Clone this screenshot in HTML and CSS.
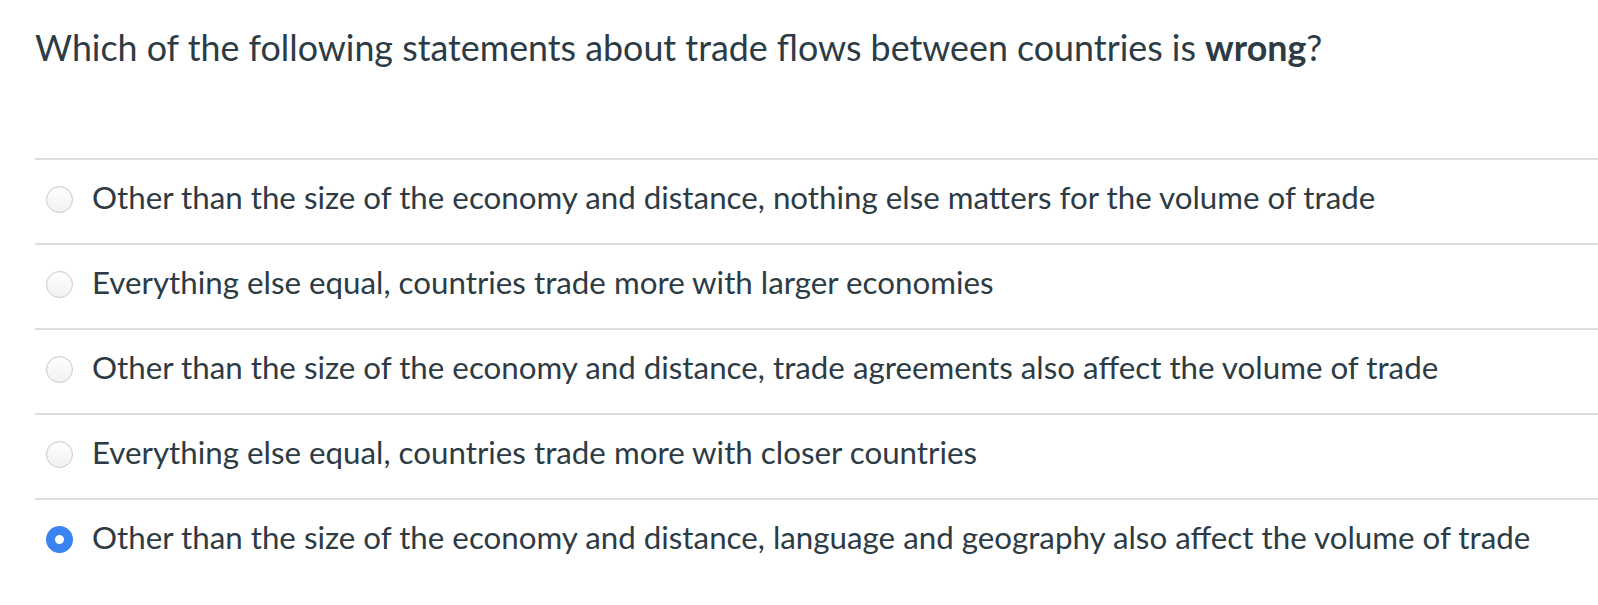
FILE: index.html
```html
<!DOCTYPE html>
<html lang="en">
<head>
<meta charset="utf-8">
<title>Quiz question</title>
<link rel="stylesheet" href="styles.css">
</head>
<body>
<div class="question">
  <div class="question-text">Which of the following statements about trade flows between countries is <strong>wrong</strong>?</div>
  <div class="answers">
    <label class="answer"><span class="radio"></span><span class="answer-text">Other than the size of the economy and distance, nothing else matters for the volume of trade</span></label>
    <label class="answer"><span class="radio"></span><span class="answer-text">Everything else equal, countries trade more with larger economies</span></label>
    <label class="answer"><span class="radio"></span><span class="answer-text">Other than the size of the economy and distance, trade agreements also affect the volume of trade</span></label>
    <label class="answer"><span class="radio"></span><span class="answer-text">Everything else equal, countries trade more with closer countries</span></label>
    <label class="answer"><span class="radio checked"></span><span class="answer-text">Other than the size of the economy and distance, language and geography also affect the volume of trade</span></label>
  </div>
</div>
</body>
</html>
```

FILE: styles.css
```css
html, body {
  margin: 0;
  padding: 0;
  background: #ffffff;
}

body {
  font-family: Lato, "Liberation Sans", sans-serif;
  color: #2d3b45;
}

.question {
  padding: 28px 0 0 35px;
}

.question-text {
  font-size: 35.8px;
  line-height: 40px;
  margin-bottom: 90px;
}

.question-text strong {
  font-weight: 700;
}

.answers {
  display: flex;
  flex-direction: column;
}

.answer {
  display: flex;
  align-items: flex-start;
  border-top: 2px solid #dddddd;
  height: 83px;
  box-sizing: content-box;
}

.radio {
  flex: none;
  width: 27px;
  height: 27px;
  box-sizing: border-box;
  border-radius: 50%;
  border: 1px solid #c9c9c9;
  background: linear-gradient(#ffffff, #f1f1f1);
  box-shadow: inset 0 1px 1px rgba(0, 0, 0, 0.04);
  margin: 26px 19px 0 11px;
}

.radio.checked {
  border: 9px solid #3a83f1;
  background: #ffffff;
  box-shadow: none;
}

.answer-text {
  font-size: 31.3px;
  line-height: 38px;
  padding-top: 18px;
}
```
